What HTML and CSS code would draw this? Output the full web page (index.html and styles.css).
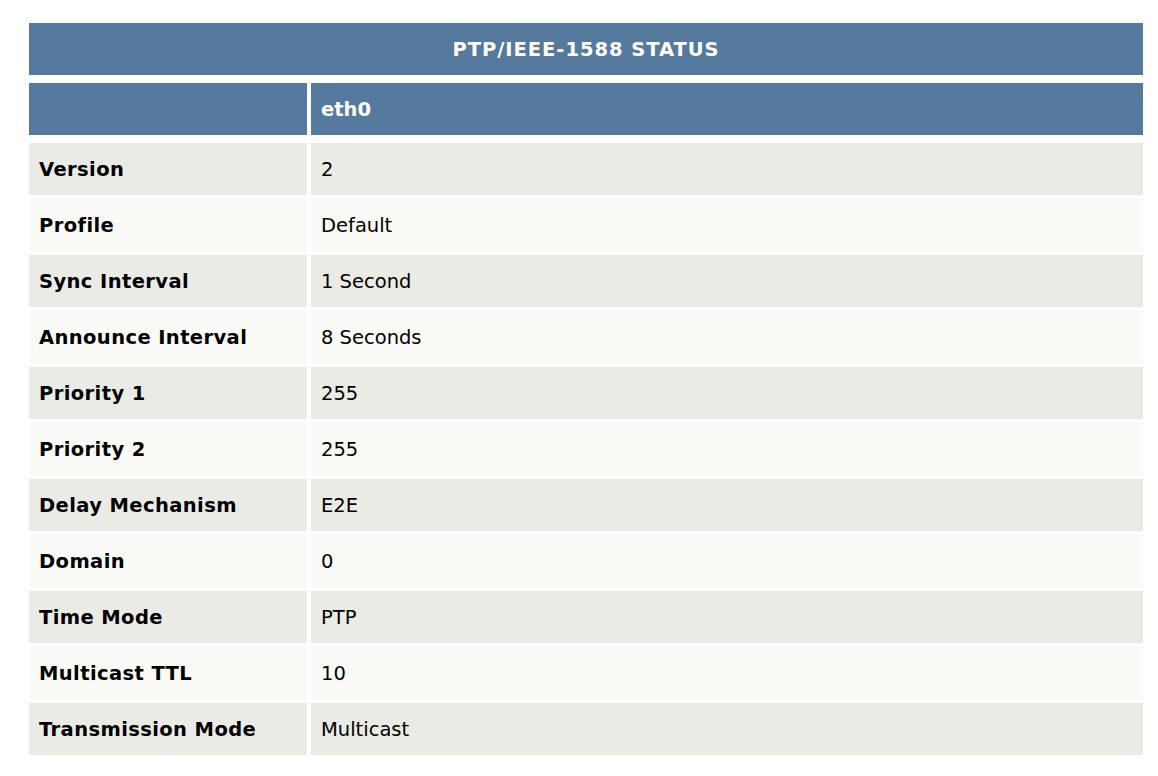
FILE: index.html
```html
<!DOCTYPE html>
<html>
<head>
<meta charset="utf-8">
<link rel="stylesheet" href="styles.css">
</head>
<body>
<div class="status">
  <div class="title">PTP/IEEE-1588 STATUS</div>
  <div class="grid head">
    <div class="cell"></div>
    <div class="cell">eth0</div>
  </div>
  <div class="rows">
    <div class="grid row odd"><div class="cell key">Version</div><div class="cell">2</div></div>
    <div class="grid row even"><div class="cell key">Profile</div><div class="cell">Default</div></div>
    <div class="grid row odd"><div class="cell key">Sync Interval</div><div class="cell">1 Second</div></div>
    <div class="grid row even"><div class="cell key">Announce Interval</div><div class="cell">8 Seconds</div></div>
    <div class="grid row odd"><div class="cell key">Priority 1</div><div class="cell">255</div></div>
    <div class="grid row even"><div class="cell key">Priority 2</div><div class="cell">255</div></div>
    <div class="grid row odd"><div class="cell key">Delay Mechanism</div><div class="cell">E2E</div></div>
    <div class="grid row even"><div class="cell key">Domain</div><div class="cell">0</div></div>
    <div class="grid row odd"><div class="cell key">Time Mode</div><div class="cell">PTP</div></div>
    <div class="grid row even"><div class="cell key">Multicast TTL</div><div class="cell">10</div></div>
    <div class="grid row odd"><div class="cell key">Transmission Mode</div><div class="cell">Multicast</div></div>
  </div>
</div>
</body>
</html>
```

FILE: styles.css
```css
html, body {
  margin: 0;
  padding: 0;
  background: #ffffff;
}
body {
  font-family: "DejaVu Sans", Verdana, sans-serif;
  font-size: 19.5px;
  color: #000;
}
.status {
  margin: 23px 15px 0 29px;
  display: flex;
  flex-direction: column;
  gap: 8px;
}
.title {
  height: 52px;
  background: #56799e;
  color: #fff;
  font-weight: bold;
  letter-spacing: 0.95px;
  display: flex;
  align-items: center;
  justify-content: center;
}
.grid {
  display: grid;
  grid-template-columns: 278px 1fr;
  column-gap: 4px;
}
.cell {
  height: 52px;
  display: flex;
  align-items: center;
  padding-left: 10px;
  box-sizing: border-box;
}
.head .cell {
  background: #56799e;
  color: #fff;
  font-weight: bold;
}
.rows {
  display: flex;
  flex-direction: column;
  gap: 4px;
}
.odd .cell { background: #ebebe6; }
.even .cell { background: #fafaf7; }
.key {
  font-weight: bold;
  letter-spacing: 0.4px;
}
```
